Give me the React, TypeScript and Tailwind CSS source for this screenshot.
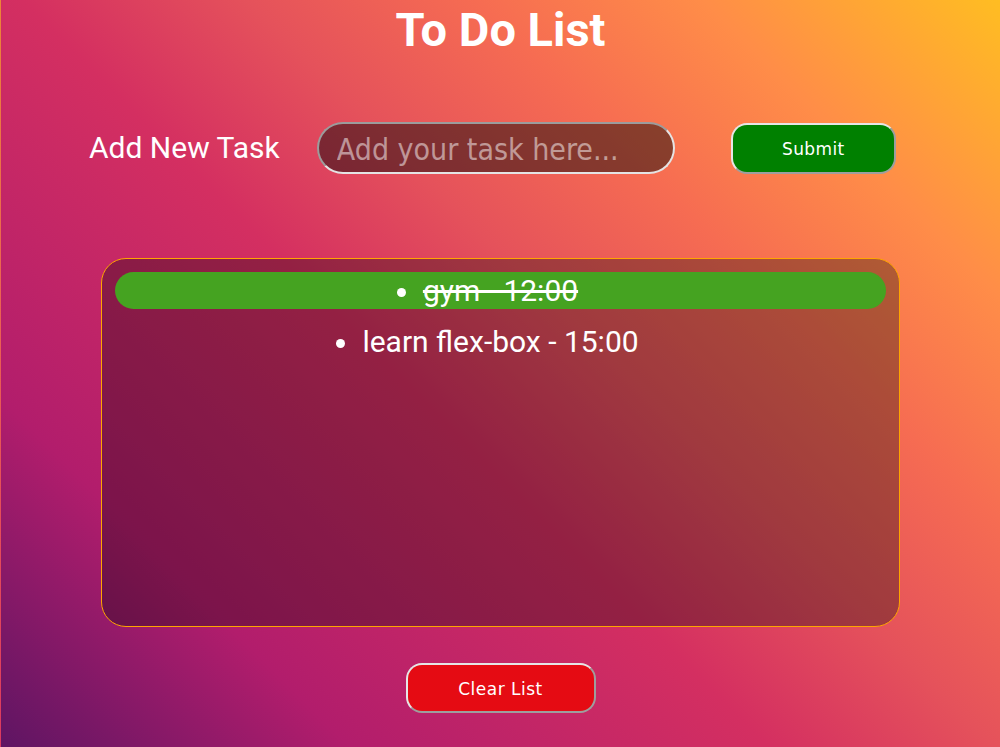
import React, { useState } from 'react';

type Task = { id: number; text: string; time: string; done: boolean };

const initialTasks: Task[] = [
  { id: 1, text: 'gym', time: '12:00', done: true },
  { id: 2, text: 'learn flex-box', time: '15:00', done: false },
];

export default function App() {
  const [tasks, setTasks] = useState<Task[]>(initialTasks);
  const [value, setValue] = useState('');

  const addTask = () => {
    if (!value.trim()) return;
    setTasks(t => [...t, { id: Date.now(), text: value.trim(), time: '', done: false }]);
    setValue('');
  };

  const toggle = (id: number) =>
    setTasks(t => t.map(x => (x.id === id ? { ...x, done: !x.done } : x)));

  return (
    <div className="min-h-screen w-full flex flex-col items-center border-l border-[#c0006a]/30 bg-[linear-gradient(45deg,#5e1563_0%,#b21d6c_20%,#d42f61_44%,#e5525b_57%,#f66c52_70%,#ff8d48_83%,#ffbd22_100%)] font-['Roboto',sans-serif] text-white">
      {/* Title */}
      <h1 className="mt-[6px] text-[47px] leading-none font-bold">To Do List</h1>

      {/* Add task row */}
      <div className="mt-[69px] flex w-full items-center pl-[88px]">
        <label htmlFor="task" className="text-3xl">Add New Task</label>
        <input
          id="task"
          value={value}
          onChange={e => setValue(e.target.value)}
          placeholder="Add your task here..."
          className="ml-[37px] h-[52px] w-[358px] rounded-full border-2 border-t-[#9c9c9c] border-l-[#9c9c9c] border-b-[#e4e4e4] border-r-[#e4e4e4] bg-black/45 pl-[18px] pt-[2px] font-['DejaVu_Sans_Condensed','DejaVu_Sans',sans-serif] text-[30px] text-white outline-none placeholder:text-white/50"
        />
        <button
          onClick={addTask}
          className="ml-[56px] h-[51px] w-[165px] rounded-[16px] border-2 border-t-[#e6e6e6] border-l-[#e6e6e6] border-b-[#9e9e9e] border-r-[#9e9e9e] bg-[#008000] pt-[3px] font-['DejaVu_Sans',sans-serif] text-[17px] tracking-[0.4px] text-white"
        >
          Submit
        </button>
      </div>

      {/* Task list */}
      <ul className="mt-[84px] h-[369px] w-[799px] list-none rounded-[25px] border border-[#ffa500] bg-black/30 p-[13px] text-center text-3xl">
        {tasks.map((t, i) => (
          <li
            key={t.id}
            onClick={() => toggle(t.id)}
            className={`h-[37px] leading-[37px] rounded-full ${i > 0 ? 'mt-[14px]' : ''} ${t.done ? 'bg-[#45a321]' : ''}`}
          >
            <span className={`relative inline-block ${t.done ? 'line-through' : ''}`}>
              <span className="absolute left-[-26px] top-[calc(50%-3px)] h-[9px] w-[9px] rounded-full bg-white" />
              {t.time ? `${t.text} - ${t.time}` : t.text}
            </span>
          </li>
        ))}
      </ul>

      {/* Clear */}
      <button
        onClick={() => setTasks([])}
        className="mt-[36px] h-[50px] w-[190px] rounded-[16px] border-2 border-t-[#e6e6e6] border-l-[#e6e6e6] border-b-[#9e9e9e] border-r-[#9e9e9e] bg-[#e50b13] pt-[3px] font-['DejaVu_Sans',sans-serif] text-[17px] tracking-[0.5px] text-white"
      >
        Clear List
      </button>
    </div>
  );
}
